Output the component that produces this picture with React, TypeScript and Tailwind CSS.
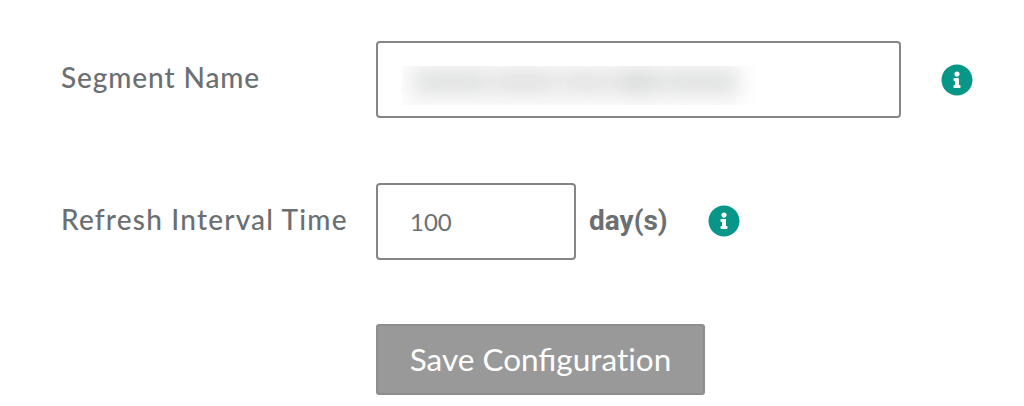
import { useState } from "react";
import type { ReactNode } from "react";
import { FaInfoCircle } from "react-icons/fa";

function FormRow({ label, children }: { label: ReactNode; children: ReactNode }) {
  return (
    <div className="flex h-[77px] items-center">
      <div className="w-[315px] shrink-0 whitespace-nowrap pb-[5px] text-[28px] font-medium leading-[34px] tracking-[1.2px]">
        {label}
      </div>
      {children}
    </div>
  );
}

function InfoIcon() {
  return <FaInfoCircle className="size-8 shrink-0 text-[#079688]" />;
}

function RedactedValue() {
  return (
    <div className="h-[39px] w-[358px] overflow-hidden bg-linear-to-r from-[#fcfcfc] from-90% to-white">
      <div className="flex h-[28px] w-[336px] gap-1 pl-3 pt-1 blur-[10px]">
        <div className="w-[75px] bg-[#dedfdf]" />
        <div className="w-[64px] bg-[#e0e0e0]" />
        <div className="w-[54px] bg-[#e2e2e2]" />
        <div className="w-[44px] bg-[#d8d9d9]" />
        <div className="w-[75px] bg-[#dedfdf]" />
      </div>
    </div>
  );
}

export default function App() {
  const [interval, setInterval] = useState("100");

  return (
    <form
      className="h-[406px] w-[1024px] overflow-hidden bg-white pl-[61px] pt-[41px] font-['Lato',sans-serif] text-[#6b6f72]"
      onSubmit={(e) => e.preventDefault()}
    >
      <FormRow label={<span className="tracking-[0.9px]">Segment Name</span>}>
        <div className="flex h-[77px] w-[525px] items-center rounded-[4px] border-2 border-[#858585] pl-6 pt-3">
          <RedactedValue />
        </div>
        <div className="ml-10">
          <InfoIcon />
        </div>
      </FormRow>

      <div className="mt-[65px]">
        <FormRow label="Refresh Interval Time">
          <input
            className="h-[77px] w-[200px] rounded-[4px] border-2 border-[#858585] bg-white px-8 text-2xl outline-none"
            value={interval}
            onChange={(e) => setInterval(e.target.value)}
          />
          <div className="ml-[13px] flex items-center pb-[2px]">
            <span className="w-[119px] font-['Roboto',sans-serif] text-[28px] font-bold leading-[34px]">
              day(s)
            </span>
            <InfoIcon />
          </div>
        </FormRow>
      </div>

      <button
        type="submit"
        className="ml-[315px] mt-[64px] h-[71px] w-[329px] rounded-[3px] border-2 border-[#8e8e8e] bg-[#999999] text-[31.5px] text-white"
      >
        Save Configurat&zwnj;ion
      </button>
    </form>
  );
}
